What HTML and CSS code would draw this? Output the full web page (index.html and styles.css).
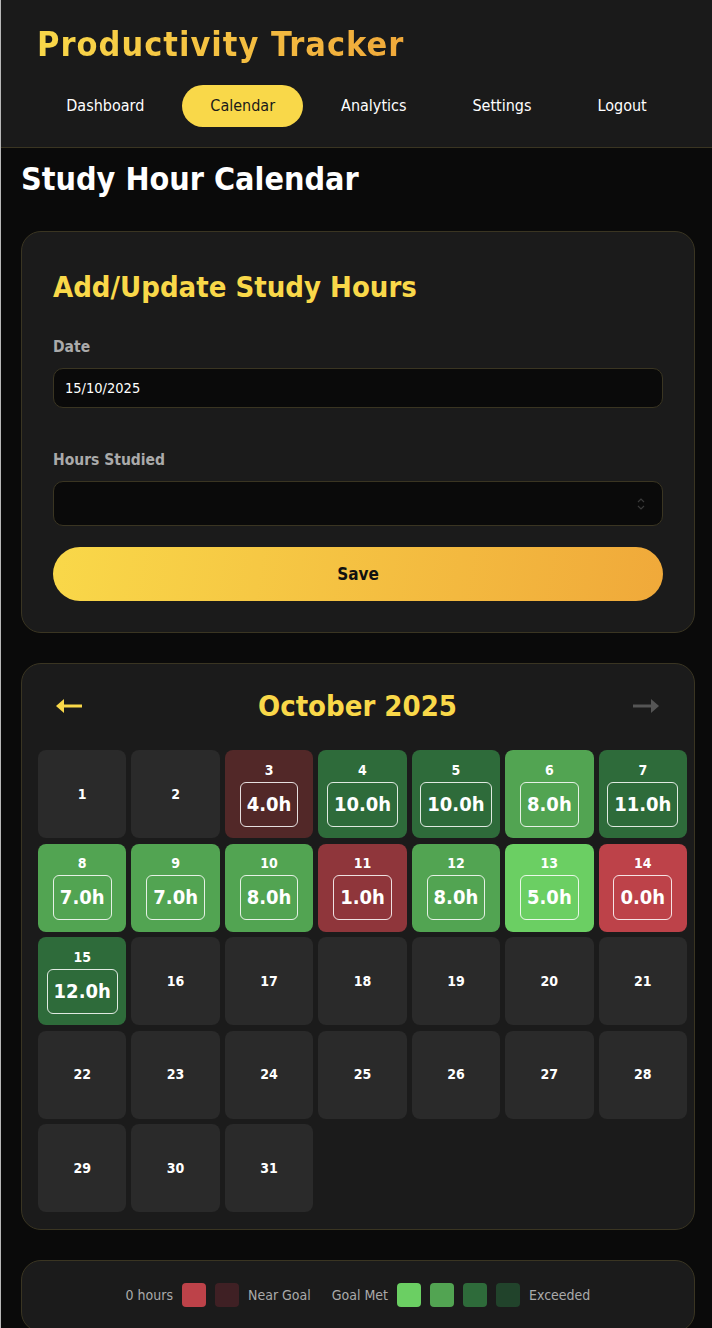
FILE: index.html
```html
<!DOCTYPE html>
<html lang="en">
<head>
<meta charset="utf-8">
<title>Study Hour Calendar</title>
<link rel="stylesheet" href="styles.css">
</head>
<body>
<header class="topbar">
  <div class="brand">Productivity Tracker</div>
  <nav class="nav">
    <a class="nav-link">Dashboard</a>
    <a class="nav-link active">Calendar</a>
    <a class="nav-link">Analytics</a>
    <a class="nav-link">Settings</a>
    <a class="nav-link">Logout</a>
  </nav>
</header>
<main class="main">
  <h1 class="page-title">Study Hour Calendar</h1>

  <section class="card form-card">
    <h2 class="card-title">Add/Update Study Hours</h2>
    <div class="field">
      <label class="label">Date</label>
      <div class="input date-input">15/10/2025</div>
    </div>
    <div class="field">
      <label class="label">Hours Studied</label>
      <div class="input number-input">
        <svg class="spinner" width="8" height="14" viewBox="0 0 8 14"><path d="M1 5 L4 2 L7 5 M1 9 L4 12 L7 9" fill="none" stroke="#3a3a3a" stroke-width="1.2"/></svg>
      </div>
    </div>
    <button class="save-btn">Save</button>
  </section>

  <section class="card cal-card">
    <div class="cal-head">
      <span class="arrow">
        <svg width="28" height="16" viewBox="0 0 28 16"><path d="M27 8 H8" stroke="#f9d849" stroke-width="3"/><path d="M1 8 L9 1 V15 Z" fill="#f9d849"/></svg>
      </span>
      <span class="month">October 2025</span>
      <span class="arrow">
        <svg width="28" height="16" viewBox="0 0 28 16"><path d="M1 8 H20" stroke="#555" stroke-width="3"/><path d="M27 8 L19 1 V15 Z" fill="#555"/></svg>
      </span>
    </div>
    <div class="grid">
      <div class="day"><span class="num">1</span></div>
      <div class="day"><span class="num">2</span></div>
      <div class="day near"><span class="num">3</span><span class="hrs">4.0h</span></div>
      <div class="day exceed"><span class="num">4</span><span class="hrs">10.0h</span></div>
      <div class="day exceed"><span class="num">5</span><span class="hrs">10.0h</span></div>
      <div class="day met2"><span class="num">6</span><span class="hrs">8.0h</span></div>
      <div class="day exceed"><span class="num">7</span><span class="hrs">11.0h</span></div>
      <div class="day met2"><span class="num">8</span><span class="hrs">7.0h</span></div>
      <div class="day met2"><span class="num">9</span><span class="hrs">7.0h</span></div>
      <div class="day met2"><span class="num">10</span><span class="hrs">8.0h</span></div>
      <div class="day low"><span class="num">11</span><span class="hrs">1.0h</span></div>
      <div class="day met2"><span class="num">12</span><span class="hrs">8.0h</span></div>
      <div class="day met1"><span class="num">13</span><span class="hrs">5.0h</span></div>
      <div class="day zero"><span class="num">14</span><span class="hrs">0.0h</span></div>
      <div class="day exceed"><span class="num">15</span><span class="hrs">12.0h</span></div>
      <div class="day"><span class="num">16</span></div>
      <div class="day"><span class="num">17</span></div>
      <div class="day"><span class="num">18</span></div>
      <div class="day"><span class="num">19</span></div>
      <div class="day"><span class="num">20</span></div>
      <div class="day"><span class="num">21</span></div>
      <div class="day"><span class="num">22</span></div>
      <div class="day"><span class="num">23</span></div>
      <div class="day"><span class="num">24</span></div>
      <div class="day"><span class="num">25</span></div>
      <div class="day"><span class="num">26</span></div>
      <div class="day"><span class="num">27</span></div>
      <div class="day"><span class="num">28</span></div>
      <div class="day"><span class="num">29</span></div>
      <div class="day"><span class="num">30</span></div>
      <div class="day"><span class="num">31</span></div>
    </div>
  </section>

  <section class="card legend">
    <span class="legend-text">0 hours</span>
    <span class="sw sw-zero"></span>
    <span class="sw sw-near"></span>
    <span class="legend-text">Near Goal</span>
    <span class="legend-text gap-left">Goal Met</span>
    <span class="sw sw-met1"></span>
    <span class="sw sw-met2"></span>
    <span class="sw sw-ex1"></span>
    <span class="sw sw-ex2"></span>
    <span class="legend-text">Exceeded</span>
  </section>
</main>
</body>
</html>
```

FILE: styles.css
```css
* { box-sizing: border-box; }

html, body {
  margin: 0;
  padding: 0;
}

body {
  background: #0a0a0a;
  color: #fff;
  font-family: "DejaVu Sans Condensed", "DejaVu Sans", sans-serif;
  border-left: 1px solid #b8b8b8;
  min-height: 1328px;
}

.topbar {
  background: #1a1a1a;
  border-bottom: 1px solid #3a3522;
  padding: 24px 36px 20px;
}

.brand {
  font-size: 34px;
  line-height: 40px;
  font-weight: bold;
  letter-spacing: 1px;
  background: linear-gradient(90deg, #f9d849, #f0a93a);
  -webkit-background-clip: text;
  background-clip: text;
  color: transparent;
  display: inline-block;
}

.nav {
  display: flex;
  justify-content: center;
  gap: 10px;
  margin-top: 21px;
}

.nav-link {
  font-size: 16px;
  line-height: 22px;
  padding: 10px 28px;
  border-radius: 21px;
  color: #fff;
}

.nav-link.active {
  background: #f9d849;
  color: #1a1a1a;
}

.main {
  padding: 12px 17px 0 20px;
}

.page-title {
  margin: 0 0 33px;
  font-size: 32px;
  line-height: 38px;
  font-weight: bold;
  color: #fff;
}

.card {
  background: #1b1b1b;
  border: 1px solid #3a3522;
  border-radius: 20px;
}

.form-card {
  padding: 38px 31px 31px;
  margin-bottom: 30px;
}

.card-title {
  margin: 0 0 34px;
  font-size: 29px;
  line-height: 34px;
  font-weight: bold;
  color: #f9d849;
}

.field {
  margin-bottom: 21px;
}

.label {
  display: block;
  color: #aaa;
  font-weight: bold;
  font-size: 15.5px;
  line-height: 18px;
  margin-bottom: 12px;
}

.input {
  background: #0a0a0a;
  border: 1px solid #3a3522;
  border-radius: 10px;
  color: #fff;
  display: flex;
  align-items: center;
}

.date-input {
  height: 40px;
  padding: 0 11px;
  font-size: 14.5px;
  margin-bottom: 43px;
}

.number-input {
  height: 45px;
  justify-content: flex-end;
  padding: 0 17px;
}

.save-btn {
  display: block;
  width: 100%;
  height: 54px;
  border: none;
  border-radius: 27px;
  background: linear-gradient(100deg, #f9d849, #f0a93a);
  color: #111;
  font-family: inherit;
  font-weight: bold;
  font-size: 17px;
  margin-top: 0;
}

.cal-card {
  padding: 16px 7px 17px 16px;
  margin-bottom: 30px;
}

.cal-head {
  display: flex;
  align-items: center;
  justify-content: space-between;
  padding: 0 27px 0 17px;
  height: 52px;
  margin-bottom: 18px;
}

.arrow {
  display: flex;
}

.month {
  font-size: 29px;
  font-weight: bold;
  color: #f9d849;
}

.grid {
  display: grid;
  grid-template-columns: repeat(7, 1fr);
  gap: 5.5px 5px;
}

.day {
  height: 88px;
  border-radius: 8px;
  background: #2a2a2a;
  display: flex;
  flex-direction: column;
  align-items: center;
  justify-content: center;
  gap: 3px;
}

.num {
  font-size: 14px;
  font-weight: bold;
  line-height: 17px;
}

.hrs {
  font-size: 20px;
  font-weight: bold;
  line-height: 24px;
  padding: 9px 6px 10px;
  border: 1.5px solid rgba(255, 255, 255, 0.85);
  border-radius: 6px;
  min-width: 55px;
  text-align: center;
}

.near { background: #522828; }
.exceed { background: #2e6b3a; }
.met2 { background: #52a452; }
.met1 { background: #6bcf63; }
.low { background: #8f363b; }
.zero { background: #bd4249; }

.legend {
  display: flex;
  align-items: center;
  justify-content: center;
  gap: 9px;
  padding: 22px 16px 24px;
}

.legend-text {
  color: #aaa;
  font-size: 14px;
}

.gap-left {
  margin-left: 12px;
}

.sw {
  width: 24px;
  height: 24px;
  border-radius: 4px;
  display: inline-block;
}

.sw-zero { background: #bd4249; }
.sw-near { background: #3f2024; }
.sw-met1 { background: #6bcf63; }
.sw-met2 { background: #52a452; }
.sw-ex1 { background: #2e6b3a; }
.sw-ex2 { background: #21432b; }
```
